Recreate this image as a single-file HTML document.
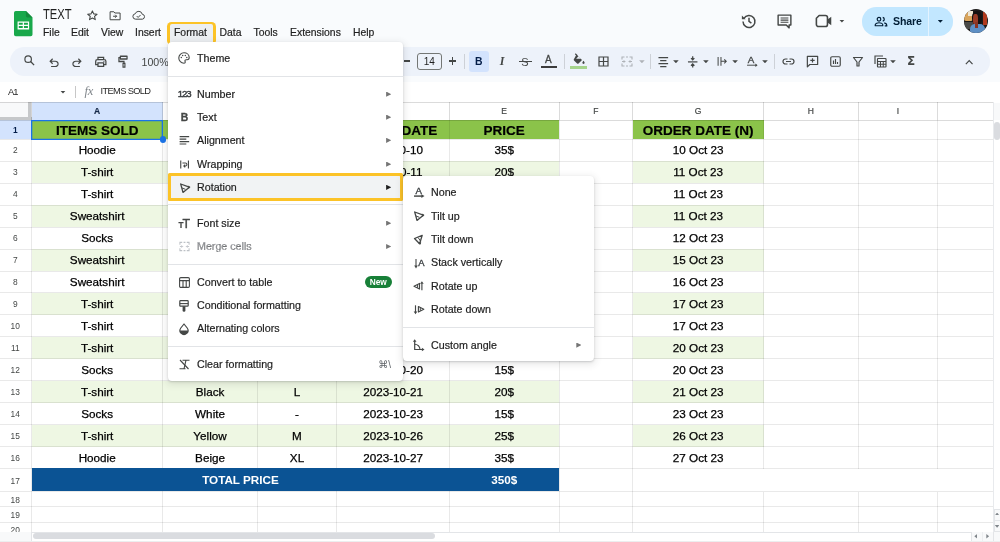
<!DOCTYPE html>
<html lang="en">
<head>
<meta charset="utf-8">
<title>TEXT - Google Sheets</title>
<style>
*{margin:0;padding:0;box-sizing:border-box}
html,body{width:1000px;height:542px;overflow:hidden;background:#f9fbfd;font-family:"Liberation Sans",sans-serif;color:#1f1f1f}
#app{position:relative;width:1000px;height:542px;overflow:hidden;will-change:transform}
#app div,#app span,#app svg{position:absolute}
#grid{left:0;top:0;width:1000px;height:542px}
.hl{left:0;width:993px;height:1px;background:#eaecee}
.vl{width:1px;background:#eaecee}
.ch{-webkit-text-stroke:.2px #444746;font-size:8.5px;color:#444746;text-align:center;line-height:18.4px}
.rn{font-size:8.4px;color:#444746;text-align:center}
.hd{-webkit-text-stroke:.2px #000;font-size:13.5px;font-weight:bold;color:#000;text-align:center;line-height:21.4px;white-space:nowrap}
.cell{-webkit-text-stroke:.25px #000;font-size:11.7px;color:#000;text-align:center;line-height:21.8px;white-space:nowrap}
.tot{font-size:11.7px;font-weight:bold;color:#fff;text-align:center;line-height:21.5px;white-space:nowrap}
.mb{-webkit-text-stroke:.2px #1f1f1f;font-size:10.4px;color:#1f1f1f;top:26px;line-height:13px;white-space:nowrap}
.ic{overflow:visible}
.menu{background:#fff;border-radius:4px;box-shadow:0 1px 2px rgba(60,64,67,.22),0 2px 7px 2px rgba(60,64,67,.11)}
.mi{-webkit-text-stroke:.2px #1f1f1f;font-size:10.7px;color:#1f1f1f;line-height:14px;white-space:nowrap}
.sep{height:1px;background:#e2e4e7}
.arr{width:5.2px;height:5.2px;background:#757575;clip-path:polygon(0 0,100% 50%,0 100%)}
.dd{width:5.6px;height:3px;background:#444746;clip-path:polygon(0 0,100% 0,50% 100%)}
.tsep{width:1px;height:14.5px;top:54px;background:#cdd1d7}
</style>
</head>
<body>
<div id="app">
<div id="grid">
<div style="left:0px;top:102.1px;width:1000px;height:439.9px;background:#fff;"></div>
<div style="left:31.5px;top:102.1px;width:131.3px;height:18.1px;background:#d3e3fd;"></div>
<div style="left:0px;top:120.2px;width:31.5px;height:19.1px;background:#d3e3fd;"></div>
<div style="left:0px;top:102.1px;width:31.5px;height:18.1px;background:#f8f9fa;"></div>
<div style="left:27.6px;top:102.1px;width:3.9px;height:18.1px;background:#c6c8ca;"></div>
<div style="left:0px;top:116.8px;width:31.5px;height:3.4px;background:#c6c8ca;"></div>
<div style="left:31.5px;top:120.2px;width:131.3px;height:19.1px;background:#8bc34a;"></div>
<div style="left:162.8px;top:120.2px;width:94.5px;height:19.1px;background:#8bc34a;"></div>
<div style="left:257.3px;top:120.2px;width:79.4px;height:19.1px;background:#8bc34a;"></div>
<div style="left:336.7px;top:120.2px;width:112.7px;height:19.1px;background:#8bc34a;"></div>
<div style="left:449.4px;top:120.2px;width:109.6px;height:19.1px;background:#8bc34a;"></div>
<div style="left:632.5px;top:120.2px;width:131.3px;height:19.1px;background:#8bc34a;"></div>
<div style="left:31.5px;top:161.25px;width:131.3px;height:21.95px;background:#eef7e3;"></div>
<div style="left:162.8px;top:161.25px;width:94.5px;height:21.95px;background:#eef7e3;"></div>
<div style="left:257.3px;top:161.25px;width:79.4px;height:21.95px;background:#eef7e3;"></div>
<div style="left:336.7px;top:161.25px;width:112.7px;height:21.95px;background:#eef7e3;"></div>
<div style="left:449.4px;top:161.25px;width:109.6px;height:21.95px;background:#eef7e3;"></div>
<div style="left:632.5px;top:161.25px;width:131.3px;height:21.95px;background:#eef7e3;"></div>
<div style="left:31.5px;top:205.15px;width:131.3px;height:21.95px;background:#eef7e3;"></div>
<div style="left:162.8px;top:205.15px;width:94.5px;height:21.95px;background:#eef7e3;"></div>
<div style="left:257.3px;top:205.15px;width:79.4px;height:21.95px;background:#eef7e3;"></div>
<div style="left:336.7px;top:205.15px;width:112.7px;height:21.95px;background:#eef7e3;"></div>
<div style="left:449.4px;top:205.15px;width:109.6px;height:21.95px;background:#eef7e3;"></div>
<div style="left:632.5px;top:205.15px;width:131.3px;height:21.95px;background:#eef7e3;"></div>
<div style="left:31.5px;top:249.05px;width:131.3px;height:21.95px;background:#eef7e3;"></div>
<div style="left:162.8px;top:249.05px;width:94.5px;height:21.95px;background:#eef7e3;"></div>
<div style="left:257.3px;top:249.05px;width:79.4px;height:21.95px;background:#eef7e3;"></div>
<div style="left:336.7px;top:249.05px;width:112.7px;height:21.95px;background:#eef7e3;"></div>
<div style="left:449.4px;top:249.05px;width:109.6px;height:21.95px;background:#eef7e3;"></div>
<div style="left:632.5px;top:249.05px;width:131.3px;height:21.95px;background:#eef7e3;"></div>
<div style="left:31.5px;top:292.95px;width:131.3px;height:21.95px;background:#eef7e3;"></div>
<div style="left:162.8px;top:292.95px;width:94.5px;height:21.95px;background:#eef7e3;"></div>
<div style="left:257.3px;top:292.95px;width:79.4px;height:21.95px;background:#eef7e3;"></div>
<div style="left:336.7px;top:292.95px;width:112.7px;height:21.95px;background:#eef7e3;"></div>
<div style="left:449.4px;top:292.95px;width:109.6px;height:21.95px;background:#eef7e3;"></div>
<div style="left:632.5px;top:292.95px;width:131.3px;height:21.95px;background:#eef7e3;"></div>
<div style="left:31.5px;top:336.85px;width:131.3px;height:21.95px;background:#eef7e3;"></div>
<div style="left:162.8px;top:336.85px;width:94.5px;height:21.95px;background:#eef7e3;"></div>
<div style="left:257.3px;top:336.85px;width:79.4px;height:21.95px;background:#eef7e3;"></div>
<div style="left:336.7px;top:336.85px;width:112.7px;height:21.95px;background:#eef7e3;"></div>
<div style="left:449.4px;top:336.85px;width:109.6px;height:21.95px;background:#eef7e3;"></div>
<div style="left:632.5px;top:336.85px;width:131.3px;height:21.95px;background:#eef7e3;"></div>
<div style="left:31.5px;top:380.75px;width:131.3px;height:21.95px;background:#eef7e3;"></div>
<div style="left:162.8px;top:380.75px;width:94.5px;height:21.95px;background:#eef7e3;"></div>
<div style="left:257.3px;top:380.75px;width:79.4px;height:21.95px;background:#eef7e3;"></div>
<div style="left:336.7px;top:380.75px;width:112.7px;height:21.95px;background:#eef7e3;"></div>
<div style="left:449.4px;top:380.75px;width:109.6px;height:21.95px;background:#eef7e3;"></div>
<div style="left:632.5px;top:380.75px;width:131.3px;height:21.95px;background:#eef7e3;"></div>
<div style="left:31.5px;top:424.65px;width:131.3px;height:21.95px;background:#eef7e3;"></div>
<div style="left:162.8px;top:424.65px;width:94.5px;height:21.95px;background:#eef7e3;"></div>
<div style="left:257.3px;top:424.65px;width:79.4px;height:21.95px;background:#eef7e3;"></div>
<div style="left:336.7px;top:424.65px;width:112.7px;height:21.95px;background:#eef7e3;"></div>
<div style="left:449.4px;top:424.65px;width:109.6px;height:21.95px;background:#eef7e3;"></div>
<div style="left:632.5px;top:424.65px;width:131.3px;height:21.95px;background:#eef7e3;"></div>
<div style="left:0px;top:101.6px;width:1000px;height:1px;background:rgba(0,0,0,.14)"></div>
<div style="left:0px;top:119.7px;width:993.3px;height:1px;background:rgba(0,0,0,.14)"></div>
<div style="left:0px;top:138.8px;width:993.3px;height:1px;background:rgba(0,0,0,.085)"></div>
<div style="left:0px;top:160.75px;width:993.3px;height:1px;background:rgba(0,0,0,.085)"></div>
<div style="left:0px;top:182.7px;width:993.3px;height:1px;background:rgba(0,0,0,.085)"></div>
<div style="left:0px;top:204.65px;width:993.3px;height:1px;background:rgba(0,0,0,.085)"></div>
<div style="left:0px;top:226.6px;width:993.3px;height:1px;background:rgba(0,0,0,.085)"></div>
<div style="left:0px;top:248.55px;width:993.3px;height:1px;background:rgba(0,0,0,.085)"></div>
<div style="left:0px;top:270.5px;width:993.3px;height:1px;background:rgba(0,0,0,.085)"></div>
<div style="left:0px;top:292.45px;width:993.3px;height:1px;background:rgba(0,0,0,.085)"></div>
<div style="left:0px;top:314.4px;width:993.3px;height:1px;background:rgba(0,0,0,.085)"></div>
<div style="left:0px;top:336.35px;width:993.3px;height:1px;background:rgba(0,0,0,.085)"></div>
<div style="left:0px;top:358.3px;width:993.3px;height:1px;background:rgba(0,0,0,.085)"></div>
<div style="left:0px;top:380.25px;width:993.3px;height:1px;background:rgba(0,0,0,.085)"></div>
<div style="left:0px;top:402.2px;width:993.3px;height:1px;background:rgba(0,0,0,.085)"></div>
<div style="left:0px;top:424.15px;width:993.3px;height:1px;background:rgba(0,0,0,.085)"></div>
<div style="left:0px;top:446.1px;width:993.3px;height:1px;background:rgba(0,0,0,.085)"></div>
<div style="left:0px;top:468.05px;width:993.3px;height:1px;background:rgba(0,0,0,.085)"></div>
<div style="left:0px;top:491.1px;width:993.3px;height:1px;background:rgba(0,0,0,.085)"></div>
<div style="left:0px;top:506.35px;width:993.3px;height:1px;background:rgba(0,0,0,.085)"></div>
<div style="left:0px;top:521.6px;width:993.3px;height:1px;background:rgba(0,0,0,.085)"></div>
<div style="left:0px;top:536.85px;width:993.3px;height:1px;background:rgba(0,0,0,.085)"></div>
<div style="left:31px;top:102.1px;width:1px;height:18.1px;background:rgba(0,0,0,.14)"></div>
<div style="left:162.3px;top:102.1px;width:1px;height:18.1px;background:rgba(0,0,0,.14)"></div>
<div style="left:256.8px;top:102.1px;width:1px;height:18.1px;background:rgba(0,0,0,.14)"></div>
<div style="left:336.2px;top:102.1px;width:1px;height:18.1px;background:rgba(0,0,0,.14)"></div>
<div style="left:448.9px;top:102.1px;width:1px;height:18.1px;background:rgba(0,0,0,.14)"></div>
<div style="left:558.5px;top:102.1px;width:1px;height:18.1px;background:rgba(0,0,0,.14)"></div>
<div style="left:632px;top:102.1px;width:1px;height:18.1px;background:rgba(0,0,0,.14)"></div>
<div style="left:763.3px;top:102.1px;width:1px;height:18.1px;background:rgba(0,0,0,.14)"></div>
<div style="left:857.5px;top:102.1px;width:1px;height:18.1px;background:rgba(0,0,0,.14)"></div>
<div style="left:937.2px;top:102.1px;width:1px;height:18.1px;background:rgba(0,0,0,.14)"></div>
<div style="left:992.8px;top:102.1px;width:1px;height:18.1px;background:rgba(0,0,0,.14)"></div>
<div style="left:31px;top:120.2px;width:1px;height:411.8px;background:rgba(0,0,0,.085)"></div>
<div style="left:162.3px;top:120.2px;width:1px;height:411.8px;background:rgba(0,0,0,.085)"></div>
<div style="left:256.8px;top:120.2px;width:1px;height:411.8px;background:rgba(0,0,0,.085)"></div>
<div style="left:336.2px;top:120.2px;width:1px;height:411.8px;background:rgba(0,0,0,.085)"></div>
<div style="left:448.9px;top:120.2px;width:1px;height:411.8px;background:rgba(0,0,0,.085)"></div>
<div style="left:558.5px;top:120.2px;width:1px;height:411.8px;background:rgba(0,0,0,.085)"></div>
<div style="left:632px;top:120.2px;width:1px;height:411.8px;background:rgba(0,0,0,.085)"></div>
<div style="left:763.3px;top:120.2px;width:1px;height:348.35px;background:rgba(0,0,0,.085)"></div>
<div style="left:763.3px;top:491.6px;width:1px;height:40.4px;background:rgba(0,0,0,.085)"></div>
<div style="left:857.5px;top:120.2px;width:1px;height:348.35px;background:rgba(0,0,0,.085)"></div>
<div style="left:857.5px;top:491.6px;width:1px;height:40.4px;background:rgba(0,0,0,.085)"></div>
<div style="left:937.2px;top:120.2px;width:1px;height:348.35px;background:rgba(0,0,0,.085)"></div>
<div style="left:937.2px;top:491.6px;width:1px;height:40.4px;background:rgba(0,0,0,.085)"></div>
<div style="left:992.8px;top:120.2px;width:1px;height:411.8px;background:rgba(0,0,0,.085)"></div>
<div style="left:31.5px;top:468.15px;width:527.5px;height:23.25px;background:#0b5394;"></div>
<div class="ch" style="left:31.5px;top:102.1px;width:131.3px;height:18.1px;font-weight:bold;color:#041e49;">A</div>
<div class="ch" style="left:162.8px;top:102.1px;width:94.5px;height:18.1px;">B</div>
<div class="ch" style="left:257.3px;top:102.1px;width:79.4px;height:18.1px;">C</div>
<div class="ch" style="left:336.7px;top:102.1px;width:112.7px;height:18.1px;">D</div>
<div class="ch" style="left:449.4px;top:102.1px;width:109.6px;height:18.1px;">E</div>
<div class="ch" style="left:559px;top:102.1px;width:73.5px;height:18.1px;">F</div>
<div class="ch" style="left:632.5px;top:102.1px;width:131.3px;height:18.1px;">G</div>
<div class="ch" style="left:763.8px;top:102.1px;width:94.2px;height:18.1px;">H</div>
<div class="ch" style="left:858px;top:102.1px;width:79.7px;height:18.1px;">I</div>
<div class="rn" style="left:0px;top:120.2px;width:30.5px;height:19.1px;font-weight:bold;color:#041e49;line-height:20.9px;">1</div>
<div class="rn" style="left:0px;top:139.3px;width:30.5px;height:21.95px;line-height:23.75px;">2</div>
<div class="rn" style="left:0px;top:161.25px;width:30.5px;height:21.95px;line-height:23.75px;">3</div>
<div class="rn" style="left:0px;top:183.2px;width:30.5px;height:21.95px;line-height:23.75px;">4</div>
<div class="rn" style="left:0px;top:205.15px;width:30.5px;height:21.95px;line-height:23.75px;">5</div>
<div class="rn" style="left:0px;top:227.1px;width:30.5px;height:21.95px;line-height:23.75px;">6</div>
<div class="rn" style="left:0px;top:249.05px;width:30.5px;height:21.95px;line-height:23.75px;">7</div>
<div class="rn" style="left:0px;top:271px;width:30.5px;height:21.95px;line-height:23.75px;">8</div>
<div class="rn" style="left:0px;top:292.95px;width:30.5px;height:21.95px;line-height:23.75px;">9</div>
<div class="rn" style="left:0px;top:314.9px;width:30.5px;height:21.95px;line-height:23.75px;">10</div>
<div class="rn" style="left:0px;top:336.85px;width:30.5px;height:21.95px;line-height:23.75px;">11</div>
<div class="rn" style="left:0px;top:358.8px;width:30.5px;height:21.95px;line-height:23.75px;">12</div>
<div class="rn" style="left:0px;top:380.75px;width:30.5px;height:21.95px;line-height:23.75px;">13</div>
<div class="rn" style="left:0px;top:402.7px;width:30.5px;height:21.95px;line-height:23.75px;">14</div>
<div class="rn" style="left:0px;top:424.65px;width:30.5px;height:21.95px;line-height:23.75px;">15</div>
<div class="rn" style="left:0px;top:446.6px;width:30.5px;height:21.95px;line-height:23.75px;">16</div>
<div class="rn" style="left:0px;top:468.55px;width:30.5px;height:23.05px;line-height:24.85px;">17</div>
<div class="rn" style="left:0px;top:491.6px;width:30.5px;height:15.25px;line-height:17.05px;">18</div>
<div class="rn" style="left:0px;top:506.85px;width:30.5px;height:15.25px;line-height:17.05px;">19</div>
<div class="rn" style="left:0px;top:522.1px;width:30.5px;height:15.25px;line-height:17.05px;">20</div>
<div class="hd" style="left:31.5px;top:120.2px;width:131.3px;height:19.1px;">ITEMS SOLD</div>
<div class="hd" style="left:162.8px;top:120.2px;width:94.5px;height:19.1px;">COLOR</div>
<div class="hd" style="left:257.3px;top:120.2px;width:79.4px;height:19.1px;">SIZE</div>
<div class="hd" style="left:336.7px;top:120.2px;width:112.7px;height:19.1px;">ORDER DATE</div>
<div class="hd" style="left:449.4px;top:120.2px;width:109.6px;height:19.1px;">PRICE</div>
<div class="hd" style="left:632.5px;top:120.2px;width:131.3px;height:19.1px;">ORDER DATE (N)</div>
<div class="cell" style="left:31.5px;top:139.3px;width:131.3px;height:21.95px;">Hoodie</div>
<div class="cell" style="left:31.5px;top:161.25px;width:131.3px;height:21.95px;">T-shirt</div>
<div class="cell" style="left:31.5px;top:183.2px;width:131.3px;height:21.95px;">T-shirt</div>
<div class="cell" style="left:31.5px;top:205.15px;width:131.3px;height:21.95px;">Sweatshirt</div>
<div class="cell" style="left:31.5px;top:227.1px;width:131.3px;height:21.95px;">Socks</div>
<div class="cell" style="left:31.5px;top:249.05px;width:131.3px;height:21.95px;">Sweatshirt</div>
<div class="cell" style="left:31.5px;top:271px;width:131.3px;height:21.95px;">Sweatshirt</div>
<div class="cell" style="left:31.5px;top:292.95px;width:131.3px;height:21.95px;">T-shirt</div>
<div class="cell" style="left:31.5px;top:314.9px;width:131.3px;height:21.95px;">T-shirt</div>
<div class="cell" style="left:31.5px;top:336.85px;width:131.3px;height:21.95px;">T-shirt</div>
<div class="cell" style="left:31.5px;top:358.8px;width:131.3px;height:21.95px;">Socks</div>
<div class="cell" style="left:31.5px;top:380.75px;width:131.3px;height:21.95px;">T-shirt</div>
<div class="cell" style="left:31.5px;top:402.7px;width:131.3px;height:21.95px;">Socks</div>
<div class="cell" style="left:31.5px;top:424.65px;width:131.3px;height:21.95px;">T-shirt</div>
<div class="cell" style="left:31.5px;top:446.6px;width:131.3px;height:21.95px;">Hoodie</div>
<div class="cell" style="left:162.8px;top:139.3px;width:94.5px;height:21.95px;">Beige</div>
<div class="cell" style="left:162.8px;top:161.25px;width:94.5px;height:21.95px;">White</div>
<div class="cell" style="left:162.8px;top:183.2px;width:94.5px;height:21.95px;">Black</div>
<div class="cell" style="left:162.8px;top:205.15px;width:94.5px;height:21.95px;">Grey</div>
<div class="cell" style="left:162.8px;top:227.1px;width:94.5px;height:21.95px;">White</div>
<div class="cell" style="left:162.8px;top:249.05px;width:94.5px;height:21.95px;">Black</div>
<div class="cell" style="left:162.8px;top:271px;width:94.5px;height:21.95px;">Beige</div>
<div class="cell" style="left:162.8px;top:292.95px;width:94.5px;height:21.95px;">Yellow</div>
<div class="cell" style="left:162.8px;top:314.9px;width:94.5px;height:21.95px;">Red</div>
<div class="cell" style="left:162.8px;top:336.85px;width:94.5px;height:21.95px;">Blue</div>
<div class="cell" style="left:162.8px;top:358.8px;width:94.5px;height:21.95px;">Black</div>
<div class="cell" style="left:162.8px;top:380.75px;width:94.5px;height:21.95px;">Black</div>
<div class="cell" style="left:162.8px;top:402.7px;width:94.5px;height:21.95px;">White</div>
<div class="cell" style="left:162.8px;top:424.65px;width:94.5px;height:21.95px;">Yellow</div>
<div class="cell" style="left:162.8px;top:446.6px;width:94.5px;height:21.95px;">Beige</div>
<div class="cell" style="left:257.3px;top:139.3px;width:79.4px;height:21.95px;">M</div>
<div class="cell" style="left:257.3px;top:161.25px;width:79.4px;height:21.95px;">S</div>
<div class="cell" style="left:257.3px;top:183.2px;width:79.4px;height:21.95px;">L</div>
<div class="cell" style="left:257.3px;top:205.15px;width:79.4px;height:21.95px;">XL</div>
<div class="cell" style="left:257.3px;top:227.1px;width:79.4px;height:21.95px;">-</div>
<div class="cell" style="left:257.3px;top:249.05px;width:79.4px;height:21.95px;">M</div>
<div class="cell" style="left:257.3px;top:271px;width:79.4px;height:21.95px;">S</div>
<div class="cell" style="left:257.3px;top:292.95px;width:79.4px;height:21.95px;">L</div>
<div class="cell" style="left:257.3px;top:314.9px;width:79.4px;height:21.95px;">M</div>
<div class="cell" style="left:257.3px;top:336.85px;width:79.4px;height:21.95px;">S</div>
<div class="cell" style="left:257.3px;top:358.8px;width:79.4px;height:21.95px;">-</div>
<div class="cell" style="left:257.3px;top:380.75px;width:79.4px;height:21.95px;">L</div>
<div class="cell" style="left:257.3px;top:402.7px;width:79.4px;height:21.95px;">-</div>
<div class="cell" style="left:257.3px;top:424.65px;width:79.4px;height:21.95px;">M</div>
<div class="cell" style="left:257.3px;top:446.6px;width:79.4px;height:21.95px;">XL</div>
<div class="cell" style="left:336.7px;top:139.3px;width:112.7px;height:21.95px;">2023-10-10</div>
<div class="cell" style="left:336.7px;top:161.25px;width:112.7px;height:21.95px;">2023-10-11</div>
<div class="cell" style="left:336.7px;top:183.2px;width:112.7px;height:21.95px;">2023-10-11</div>
<div class="cell" style="left:336.7px;top:205.15px;width:112.7px;height:21.95px;">2023-10-11</div>
<div class="cell" style="left:336.7px;top:227.1px;width:112.7px;height:21.95px;">2023-10-12</div>
<div class="cell" style="left:336.7px;top:249.05px;width:112.7px;height:21.95px;">2023-10-15</div>
<div class="cell" style="left:336.7px;top:271px;width:112.7px;height:21.95px;">2023-10-16</div>
<div class="cell" style="left:336.7px;top:292.95px;width:112.7px;height:21.95px;">2023-10-17</div>
<div class="cell" style="left:336.7px;top:314.9px;width:112.7px;height:21.95px;">2023-10-17</div>
<div class="cell" style="left:336.7px;top:336.85px;width:112.7px;height:21.95px;">2023-10-20</div>
<div class="cell" style="left:336.7px;top:358.8px;width:112.7px;height:21.95px;">2023-10-20</div>
<div class="cell" style="left:336.7px;top:380.75px;width:112.7px;height:21.95px;">2023-10-21</div>
<div class="cell" style="left:336.7px;top:402.7px;width:112.7px;height:21.95px;">2023-10-23</div>
<div class="cell" style="left:336.7px;top:424.65px;width:112.7px;height:21.95px;">2023-10-26</div>
<div class="cell" style="left:336.7px;top:446.6px;width:112.7px;height:21.95px;">2023-10-27</div>
<div class="cell" style="left:449.4px;top:139.3px;width:109.6px;height:21.95px;">35$</div>
<div class="cell" style="left:449.4px;top:161.25px;width:109.6px;height:21.95px;">20$</div>
<div class="cell" style="left:449.4px;top:183.2px;width:109.6px;height:21.95px;">20$</div>
<div class="cell" style="left:449.4px;top:205.15px;width:109.6px;height:21.95px;">30$</div>
<div class="cell" style="left:449.4px;top:227.1px;width:109.6px;height:21.95px;">15$</div>
<div class="cell" style="left:449.4px;top:249.05px;width:109.6px;height:21.95px;">30$</div>
<div class="cell" style="left:449.4px;top:271px;width:109.6px;height:21.95px;">30$</div>
<div class="cell" style="left:449.4px;top:292.95px;width:109.6px;height:21.95px;">20$</div>
<div class="cell" style="left:449.4px;top:314.9px;width:109.6px;height:21.95px;">20$</div>
<div class="cell" style="left:449.4px;top:336.85px;width:109.6px;height:21.95px;">20$</div>
<div class="cell" style="left:449.4px;top:358.8px;width:109.6px;height:21.95px;">15$</div>
<div class="cell" style="left:449.4px;top:380.75px;width:109.6px;height:21.95px;">20$</div>
<div class="cell" style="left:449.4px;top:402.7px;width:109.6px;height:21.95px;">15$</div>
<div class="cell" style="left:449.4px;top:424.65px;width:109.6px;height:21.95px;">25$</div>
<div class="cell" style="left:449.4px;top:446.6px;width:109.6px;height:21.95px;">35$</div>
<div class="cell" style="left:632.5px;top:139.3px;width:131.3px;height:21.95px;">10 Oct 23</div>
<div class="cell" style="left:632.5px;top:161.25px;width:131.3px;height:21.95px;">11 Oct 23</div>
<div class="cell" style="left:632.5px;top:183.2px;width:131.3px;height:21.95px;">11 Oct 23</div>
<div class="cell" style="left:632.5px;top:205.15px;width:131.3px;height:21.95px;">11 Oct 23</div>
<div class="cell" style="left:632.5px;top:227.1px;width:131.3px;height:21.95px;">12 Oct 23</div>
<div class="cell" style="left:632.5px;top:249.05px;width:131.3px;height:21.95px;">15 Oct 23</div>
<div class="cell" style="left:632.5px;top:271px;width:131.3px;height:21.95px;">16 Oct 23</div>
<div class="cell" style="left:632.5px;top:292.95px;width:131.3px;height:21.95px;">17 Oct 23</div>
<div class="cell" style="left:632.5px;top:314.9px;width:131.3px;height:21.95px;">17 Oct 23</div>
<div class="cell" style="left:632.5px;top:336.85px;width:131.3px;height:21.95px;">20 Oct 23</div>
<div class="cell" style="left:632.5px;top:358.8px;width:131.3px;height:21.95px;">20 Oct 23</div>
<div class="cell" style="left:632.5px;top:380.75px;width:131.3px;height:21.95px;">21 Oct 23</div>
<div class="cell" style="left:632.5px;top:402.7px;width:131.3px;height:21.95px;">23 Oct 23</div>
<div class="cell" style="left:632.5px;top:424.65px;width:131.3px;height:21.95px;">26 Oct 23</div>
<div class="cell" style="left:632.5px;top:446.6px;width:131.3px;height:21.95px;">27 Oct 23</div>
<div class="tot" style="left:31.5px;top:468.55px;width:417.9px;height:23.05px;">TOTAL PRICE</div>
<div class="tot" style="left:449.4px;top:468.55px;width:109.6px;height:23.05px;">350$</div>
<div style="left:30.8px;top:119.6px;width:132.5px;height:20.3px;box-shadow:inset 0 0 0 1.3px #1a73e8"></div>
<div style="left:159.8px;top:136.3px;width:6.4px;height:6.4px;border-radius:50%;background:#1a73e8"></div>
</div>

<!-- top header background -->
<div style="left:0;top:0;width:1000px;height:82px;background:#f9fbfd"></div>
<div style="left:0;top:82px;width:1000px;height:20px;background:#fff"></div>

<!-- ===== HEADER ===== -->
<!-- sheets logo -->
<svg class="ic" style="left:13.6px;top:10.6px" width="18.5" height="25.3" viewBox="0 0 18.6 25.6" preserveAspectRatio="none">
  <path d="M1.8 0H12l6.6 6.6v17.2a1.8 1.8 0 0 1-1.8 1.800H1.800A1.800 1.800 0 0 1 0 23.800V1.800A1.800 1.800 0 0 1 1.800 0z" fill="#19a84b"/>
  <path d="M12 0l6.600 6.600H13.500A1.500 1.500 0 0 1 12 5.100z" fill="#158a3c"/>
  <path d="M3.600 10.600h11.600v8H3.600z M4.800 11.900v2h4v-2z M10 11.900v2h4v-2z M4.800 15.200v2h4v-2z M10 15.200v2h4v-2z" fill="#fff" fill-rule="evenodd"/>
</svg>
<div style="left:43px;top:6.2px;font-size:14px;line-height:16px;color:#1f1f1f;white-space:nowrap;transform:scaleX(.8);transform-origin:0 0">TEXT</div>
<!-- star -->
<svg class="ic" style="left:85.6px;top:8.7px" width="12.8" height="12.8" viewBox="0 0 24 24"><path d="M12 3.500l2.500 5.700 6.200.600-4.700 4.100 1.400 6.100L12 16.800 6.600 20l1.400-6.100-4.700-4.100 6.200-.600z" fill="none" stroke="#444746" stroke-width="2" stroke-linejoin="round"/></svg>
<!-- move folder -->
<svg class="ic" style="left:109.4px;top:9.6px" width="12.2" height="11" viewBox="0 0 24 22"><path d="M2 3.500h7.500l2 2.500H22v13.500H2z" fill="none" stroke="#444746" stroke-width="2" stroke-linejoin="round"/><path d="M8 12.500h7m-2.800-3l3 3-3 3" fill="none" stroke="#444746" stroke-width="2"/></svg>
<!-- cloud done -->
<svg class="ic" style="left:131.6px;top:9.8px" width="13.6" height="10.2" viewBox="0 0 30 22"><path d="M8 20a6 6 0 0 1-.800-11.950A8 8 0 0 1 22.600 9.100 5.500 5.500 0 0 1 23 20z" fill="none" stroke="#444746" stroke-width="2.200" stroke-linejoin="round"/><path d="M10.500 13.200l3 3 5.500-5.600" fill="none" stroke="#444746" stroke-width="2.200"/></svg>

<!-- menu bar -->
<div style="left:167.2px;top:21.6px;width:48.6px;height:23px;border-radius:4.5px;background:#fcc327"></div>
<div style="left:169.9px;top:24.3px;width:43.2px;height:20px;border-radius:2px;background:#eceff2"></div>
<div class="mb" style="left:43px">File</div>
<div class="mb" style="left:71px">Edit</div>
<div class="mb" style="left:101px">View</div>
<div class="mb" style="left:135px">Insert</div>
<div class="mb" style="left:174px">Format</div>
<div class="mb" style="left:219.500px">Data</div>
<div class="mb" style="left:253.500px">Tools</div>
<div class="mb" style="left:290px">Extensions</div>
<div class="mb" style="left:353px">Help</div>

<!-- history -->
<svg class="ic" style="left:739.500px;top:12px" width="18" height="18" viewBox="0 0 24 24"><path d="M5.200 8.500A8 8 0 1 1 4 12.800" fill="none" stroke="#444746" stroke-width="2"/><path d="M2.500 4.800v5h5z" fill="#444746"/><path d="M12 7.500v5l3.200 2.200" fill="none" stroke="#444746" stroke-width="2"/></svg>
<!-- comment -->
<svg class="ic" style="left:776px;top:13px" width="17" height="17" viewBox="0 0 24 24"><path d="M3 3h18v14H18.500v4l-4-4H3z" fill="none" stroke="#444746" stroke-width="2" stroke-linejoin="round"/><path d="M6.500 7h11M6.500 10h11M6.500 13h11" stroke="#444746" stroke-width="1.600"/></svg>
<!-- video -->
<svg class="ic" style="left:814.500px;top:14px" width="18" height="14" viewBox="0 0 26 20"><path d="M6 2h9a3 3 0 0 1 3 3v10a3 3 0 0 1-3 3H5a3 3 0 0 1-3-3V6z" fill="none" stroke="#444746" stroke-width="2.300" stroke-linejoin="round"/><path d="M18 8l5.500-4v12L18 12z" fill="#444746"/></svg>
<div class="dd" style="left:839.1px;top:19.6px"></div>
<!-- share -->
<div style="left:861.500px;top:7px;width:91px;height:28.600px;border-radius:14.300px;background:#c2e7ff"></div>
<div style="left:927.500px;top:7px;width:1px;height:28.600px;background:#e4f3ff"></div>
<svg class="ic" style="left:873.500px;top:15.500px" width="14" height="11" viewBox="0 0 28 22"><circle cx="10" cy="6.500" r="3.600" fill="none" stroke="#001d35" stroke-width="2.400"/><path d="M2.500 19.500v-1.800c0-2.800 5-4.200 7.500-4.200s7.500 1.400 7.500 4.200v1.800z" fill="none" stroke="#001d35" stroke-width="2.400" stroke-linejoin="round"/><path d="M17.500 2.700a3.900 3.900 0 0 1 0 7.600M20.500 13.800c2.500.700 5 2 5 4v1.800h-4" fill="none" stroke="#001d35" stroke-width="2.400"/></svg>
<div style="left:893px;top:14px;font-size:10.6px;font-weight:bold;color:#001d35;line-height:14px;white-space:nowrap;letter-spacing:-.15px">Share</div>
<div class="dd" style="left:937.5px;top:19.8px;background:#001d35"></div>
<!-- avatar -->
<div style="left:963.8px;top:9.1px;width:24.4px;height:24.4px;border-radius:50%;overflow:hidden;background:#1d1b1b">
  <div style="left:0;top:3px;width:9.5px;height:9px;background:#d9a45c;border-radius:2px"></div>
  <div style="left:4px;top:2px;width:5px;height:5px;background:#efe6d2"></div>
  <div style="left:0;top:13px;width:9px;height:7px;background:#4a4a48"></div>
  <div style="left:8.5px;top:1.5px;width:10px;height:14px;border-radius:45%;background:#151212"></div>
  <div style="left:9.5px;top:5px;width:5px;height:11px;border-radius:40%;background:#9a3b26"></div>
  <div style="left:6px;top:15px;width:15px;height:10px;border-radius:5px 5px 0 0;background:#5e8fc4"></div>
  <div style="left:11px;top:13px;width:3.5px;height:6px;background:#8a3423"></div>
  <div style="left:19px;top:3px;width:4px;height:13px;background:#b23a1e"></div>
</div>

<!-- ===== TOOLBAR ===== -->
<div style="left:10px;top:47px;width:979.500px;height:28.600px;border-radius:14.300px;background:#edf2fa"></div>
<!-- search -->
<svg class="ic" style="left:23px;top:54px" width="13" height="13" viewBox="0 0 24 24"><circle cx="9.500" cy="9.500" r="6" fill="none" stroke="#444746" stroke-width="2.200"/><path d="M14 14l6.500 6.500" stroke="#444746" stroke-width="2.400"/></svg>
<!-- undo -->
<svg class="ic" style="left:47px;top:55.6px" width="14" height="14" viewBox="0 0 24 24"><path d="M7 19v-2h7.100q1.575 0 2.738-1T18 13.500 16.838 11 14.100 10H7.800l2.600 2.600L9 14 4 9l5-5 1.400 1.400L7.800 8h6.300q2.425 0 4.163 1.575T20 13.500t-1.737 3.925T14.100 19z" fill="#444746"/></svg>
<!-- redo -->
<svg class="ic" style="left:70.2px;top:55.6px" width="14" height="14" viewBox="0 0 24 24"><g transform="translate(24 0) scale(-1 1)"><path d="M7 19v-2h7.100q1.575 0 2.738-1T18 13.500 16.838 11 14.100 10H7.800l2.600 2.600L9 14 4 9l5-5 1.400 1.400L7.800 8h6.300q2.425 0 4.163 1.575T20 13.500t-1.737 3.925T14.100 19z" fill="#444746"/></g></svg>
<!-- print -->
<svg class="ic" style="left:93.8px;top:54.6px" width="13.6" height="13.6" viewBox="0 0 24 24"><path d="M7 8V4h10v4M7 17H3v-6a3 3 0 0 1 3-3h12a3 3 0 0 1 3 3v6h-4" fill="none" stroke="#444746" stroke-width="2.200"/><path d="M7 14h10v6H7z" fill="none" stroke="#444746" stroke-width="2.200"/><circle cx="17.500" cy="11.500" r="1.100" fill="#444746"/></svg>
<!-- paint format -->
<svg class="ic" style="left:117px;top:54.3px" width="13.4" height="15" viewBox="0 0 24 24" preserveAspectRatio="none"><path d="M6 3.500h12v4.500H6z" fill="none" stroke="#444746" stroke-width="2.200" stroke-linejoin="round"/><path d="M6 5.700H3.500v6.300h9v3" fill="none" stroke="#444746" stroke-width="2.200"/><path d="M10.800 15h3.400v6h-3.400z" fill="none" stroke="#444746" stroke-width="2"/></svg>
<div style="left:141.500px;top:54.500px;font-size:10.600px;line-height:14px;color:#444746;white-space:nowrap">100%</div>

<!-- font size -->
<div style="left:404px;top:60.4px;width:5.5px;height:1.4px;background:#444746"></div>
<div style="left:417px;top:53px;width:24.500px;height:17px;border:1px solid #747775;border-radius:3px"></div>
<div style="left:417px;top:54.500px;width:24.500px;font-size:10px;line-height:14px;text-align:center;color:#1f1f1f">14</div>
<div style="left:448.5px;top:60.4px;width:7.6px;height:1.5px;background:#444746"></div>
<div style="left:451.55px;top:57.35px;width:1.5px;height:7.6px;background:#444746"></div>
<div class="tsep" style="left:464px"></div>
<!-- bold -->
<div style="left:468.500px;top:51px;width:20.500px;height:21px;border-radius:3px;background:#d3e3fd"></div>
<div style="left:468.500px;top:55px;width:20.500px;font-size:10.4px;font-weight:bold;line-height:14px;text-align:center;color:#041e49">B</div>
<!-- italic -->
<div style="left:494px;top:54px;width:16px;font-size:12px;font-style:italic;font-weight:bold;font-family:'Liberation Serif',serif;line-height:14px;text-align:center;color:#444746">I</div>
<!-- strike -->
<div style="left:517px;top:54.500px;width:16px;font-size:11px;line-height:14px;text-align:center;color:#444746">S</div>
<div style="left:518.500px;top:60.800px;width:13px;height:1.200px;background:#444746"></div>
<!-- text color -->
<div style="left:540.3px;top:52.6px;width:16px;font-size:10px;line-height:14px;text-align:center;color:#444746;-webkit-text-stroke:.3px #444746">A</div>
<div style="left:541px;top:65.6px;width:16.4px;height:2.6px;background:#3c3c3c"></div>
<div class="tsep" style="left:563.800px"></div>
<!-- fill color -->
<svg class="ic" style="left:571.500px;top:53px" width="14" height="12" viewBox="0 0 28 24"><path d="M9 3l11 11-7 7a2 2 0 0 1-2.800 0L4 14.800a2 2 0 0 1 0-2.800z" fill="#444746"/><path d="M8.200 11.500l4.800-4.800 4.800 4.800z" fill="#edf2fa"/><path d="M6.500 1.500l4 4" stroke="#444746" stroke-width="2.200"/><path d="M23 15.500s2.300 2.600 2.300 4.200a2.300 2.300 0 0 1-4.600 0c0-1.600 2.300-4.200 2.300-4.200z" fill="#444746"/></svg>
<div style="left:570.3px;top:65.5px;width:16.8px;height:3.2px;background:#a5d48c"></div>
<!-- borders -->
<svg class="ic" style="left:597.500px;top:55.500px" width="11" height="11" viewBox="0 0 22 22"><path d="M2 2h18v18H2zM11 2v18M2 11h18" fill="none" stroke="#444746" stroke-width="2.400"/></svg>
<!-- merge (disabled) -->
<svg class="ic" style="left:621px;top:55.500px" width="12" height="11" viewBox="0 0 24 22"><path d="M2 7V2h5M10 2h4M17 2h5v5M2 15v5h5M10 20h4M17 20h5v-5" fill="none" stroke="#aeb2b7" stroke-width="2.200"/><path d="M2 11h6m-2.500-2.500L8 11l-2.500 2.500M22 11h-6m2.500-2.500L16 11l2.500 2.500" fill="none" stroke="#aeb2b7" stroke-width="2"/></svg>
<div class="dd" style="left:639.1px;top:60.3px;background:#aeb2b7"></div>
<div class="tsep" style="left:650px"></div>
<!-- h-align -->
<svg class="ic" style="left:657.5px;top:56.6px" width="10.6" height="10.4" viewBox="0 0 22 22" preserveAspectRatio="none"><path d="M1 1.5h20M4.500 7.800h13M1 14.200h20M4.500 20.500h13" stroke="#444746" stroke-width="2.700"/></svg>
<div class="dd" style="left:673.1px;top:60.3px"></div>
<!-- v-align -->
<svg class="ic" style="left:686.6px;top:56px" width="11.4" height="11.8" viewBox="0 0 24 26" preserveAspectRatio="none"><path d="M2 13h20" stroke="#444746" stroke-width="2.700"/><path d="M12 0.500v7m-3.500-3L12 8.500 15.500 4.500M12 25.500v-7m-3.500 3L12 17.500l3.500 4" fill="none" stroke="#444746" stroke-width="2.600"/></svg>
<div class="dd" style="left:703.1px;top:60.3px"></div>
<!-- wrap -->
<svg class="ic" style="left:717px;top:56.2px" width="10.6" height="10.6" viewBox="0 0 24 24"><path d="M2.500 2v20M9 2v20" stroke="#444746" stroke-width="2.300"/><path d="M9 12h12m-4.500-4.500L21 12l-4.500 4.500" fill="none" stroke="#444746" stroke-width="2.300"/></svg>
<div class="dd" style="left:732.3px;top:60.3px"></div>
<!-- rotate -->
<div style="left:744px;top:52.5px;width:14px;font-size:9.8px;line-height:14px;text-align:center;color:#444746;-webkit-text-stroke:.35px #444746">A</div>
<svg class="ic" style="left:746.5px;top:63.3px" width="11.5" height="4.4" viewBox="0 0 26 10"><path d="M0 5h22" stroke="#444746" stroke-width="2.200"/><path d="M19 1l5 4-5 4z" fill="#444746"/></svg>
<div class="dd" style="left:762.2px;top:60.3px"></div>
<div class="tsep" style="left:774px"></div>
<!-- link -->
<svg class="ic" style="left:781.500px;top:57.500px" width="13" height="7" viewBox="0 0 26 14"><path d="M11 2H7a5 5 0 0 0 0 10h4M15 2h4a5 5 0 0 1 0 10h-4M8 7h10" fill="none" stroke="#444746" stroke-width="2.400"/></svg>
<!-- add comment -->
<svg class="ic" style="left:805.500px;top:54.500px" width="13" height="13" viewBox="0 0 24 24"><path d="M2.500 2.500h19v15H7l-4.500 4.500z" fill="none" stroke="#444746" stroke-width="2.200" stroke-linejoin="round"/><path d="M12 6v8M8 10h8" stroke="#444746" stroke-width="2.200"/></svg>
<!-- chart -->
<svg class="ic" style="left:829.500px;top:55.500px" width="11" height="11" viewBox="0 0 22 22"><rect x="1.500" y="1.500" width="19" height="19" rx="2.500" fill="none" stroke="#444746" stroke-width="2.300"/><path d="M7 16V9M11 16V6M15 16v-4" stroke="#444746" stroke-width="2.300"/></svg>
<!-- filter -->
<svg class="ic" style="left:852px;top:55.500px" width="12" height="12" viewBox="0 0 24 24"><path d="M3 3h18l-7 9v8h-4v-8z" fill="none" stroke="#444746" stroke-width="2.400" stroke-linejoin="round"/></svg>
<!-- filter views / table -->
<svg class="ic" style="left:873.500px;top:54.500px" width="13" height="13" viewBox="0 0 26 26"><path d="M2 18V2h16" fill="none" stroke="#444746" stroke-width="2.300"/><rect x="7" y="7" width="17" height="17" rx="1" fill="none" stroke="#444746" stroke-width="2.300"/><path d="M7 13h17M13 13v11M18.500 13v11M7 18.500h17" stroke="#444746" stroke-width="2"/></svg>
<div class="dd" style="left:890.2px;top:60.3px"></div>
<!-- sigma -->
<div style="left:904px;top:53.8px;width:14px;font-size:12px;font-weight:bold;line-height:15px;text-align:center;color:#444746;font-family:'DejaVu Sans','Liberation Sans',sans-serif">Σ</div>
<!-- collapse chevron -->
<svg class="ic" style="left:965px;top:58.5px" width="8.4" height="5.900" viewBox="0 0 20 14"><path d="M2 12l8-8 8 8" fill="none" stroke="#444746" stroke-width="2.800"/></svg>

<!-- ===== FORMULA BAR ===== -->
<div style="left:8px;top:85px;font-size:9.4px;line-height:13px;color:#1f1f1f;white-space:nowrap;letter-spacing:-.9px">A1</div>
<div class="dd" style="left:60.2px;top:90.6px"></div>
<div style="left:75px;top:86px;width:1px;height:12px;background:#c7c7c7"></div>
<div style="left:84.500px;top:84px;font-size:12.5px;line-height:14px;color:#80868b;font-style:italic;font-family:'Liberation Serif',serif;white-space:nowrap;letter-spacing:-.3px">fx</div>
<div style="left:100.500px;top:85px;font-size:9.3px;line-height:13px;color:#1f1f1f;white-space:nowrap;letter-spacing:-.64px">ITEMS SOLD</div>

<!-- ===== SCROLLBARS ===== -->
<div style="left:993.3px;top:102px;width:6.7px;height:430px;background:#fff;border-left:1px solid #e8eaed"></div>
<div style="left:993.8px;top:102.5px;width:6.2px;height:17.5px;background:#f8f9fa"></div>
<div style="left:994.3px;top:121.5px;width:6px;height:18px;border-radius:3px;background:#dadce0"></div>
<!-- vertical scroll buttons -->
<div style="left:993.6px;top:508.6px;width:7px;height:23.4px;background:#f8f9fa;border:1px solid #e3e5e8"></div>
<div style="left:993.6px;top:520.3px;width:7px;height:1px;background:#e3e5e8"></div>
<div style="left:994.8px;top:512.6px;width:4.6px;height:2.8px;background:#80868b;clip-path:polygon(50% 0,100% 100%,0 100%)"></div>
<div style="left:994.8px;top:525px;width:4.6px;height:2.8px;background:#80868b;clip-path:polygon(0 0,100% 0,50% 100%)"></div>
<!-- horizontal scrollbar row -->
<div style="left:0;top:531.5px;width:1000px;height:10.5px;background:#fff;border-top:1px solid #e3e5e8"></div>
<div style="left:0;top:532px;width:31.5px;height:10px;background:#f8f9fa;border-right:1px solid #e3e5e8"></div>
<div style="left:33px;top:533.2px;width:401.6px;height:6px;border-radius:3px;background:#dadce0"></div>
<div style="left:970.5px;top:532px;width:29.5px;height:10px;background:#f8f9fa;border-left:1px solid #e3e5e8"></div>
<div style="left:981.5px;top:532px;width:1px;height:9px;background:#eceef0"></div>
<div style="left:993.4px;top:532px;width:1px;height:9px;background:#e3e5e8"></div>
<div style="left:974.3px;top:534px;width:2.8px;height:4.6px;background:#80868b;clip-path:polygon(100% 0,100% 100%,0 50%)"></div>
<div style="left:986.3px;top:534px;width:2.8px;height:4.6px;background:#80868b;clip-path:polygon(0 0,100% 50%,0 100%)"></div>
<div style="left:0;top:540.6px;width:1000px;height:1.4px;background:#eceeef"></div>

<!-- ===== MENUS ===== -->
<div class="menu" style="left:168px;top:42px;width:235px;height:339px"></div>
<div style="left:168.1px;top:173.1px;width:234.6px;height:28.1px;background:#fcc327;border-radius:1.5px"></div>
<div style="left:170.9px;top:176px;width:229px;height:22.3px;background:#f1f3f4;border-radius:.5px"></div>
<div class="mi" style="left:197px;top:51px;">Theme</div>
<div class="mi" style="left:197px;top:87px;">Number</div>
<div class="mi" style="left:197px;top:110px;">Text</div>
<div class="mi" style="left:197px;top:133.1px;">Alignment</div>
<div class="mi" style="left:197px;top:157px;">Wrapping</div>
<div class="mi" style="left:197px;top:180.3px;">Rotation</div>
<div class="mi" style="left:197px;top:216px;">Font size</div>
<div class="mi" style="left:197px;top:239.3px;color:#b0b3b8;">Merge cells</div>
<div class="mi" style="left:197px;top:275px;">Convert to table</div>
<div class="mi" style="left:197px;top:298.3px;">Conditional formatting</div>
<div class="mi" style="left:197px;top:321.2px;">Alternating colors</div>
<div class="mi" style="left:197px;top:357px;">Clear formatting</div>
<div class="sep" style="left:168px;top:75.8px;width:235px"></div>
<div class="sep" style="left:168px;top:204.2px;width:235px"></div>
<div class="sep" style="left:168px;top:264px;width:235px"></div>
<div class="sep" style="left:168px;top:346.4px;width:235px"></div>
<div class="arr" style="left:386.1px;top:91.6px"></div>
<div class="arr" style="left:386.1px;top:114.6px"></div>
<div class="arr" style="left:386.1px;top:137.7px"></div>
<div class="arr" style="left:386.1px;top:161.6px"></div>
<div class="arr" style="left:386.1px;top:220.6px"></div>
<div class="arr" style="left:386.1px;top:243.9px"></div>
<div class="arr" style="left:386.1px;top:184.7px;background:#1f1f1f"></div>
<div style="left:364.5px;top:276px;width:27.5px;height:12px;border-radius:6px;background:#188038"></div>
<div style="left:364.5px;top:276px;width:27.5px;height:12px;font-size:8.3px;font-weight:bold;color:#fff;text-align:center;line-height:12.4px">New</div>
<div style="left:378.3px;top:357.5px;font-size:10px;color:#5f6368;line-height:14px;white-space:nowrap;font-family:'DejaVu Sans','Liberation Sans',sans-serif">⌘<span style="position:static;font-family:'Liberation Sans',sans-serif">\</span></div>
<svg class="ic" style="left:178px;top:52px" width="12" height="12" viewBox="0 0 12 12"><path d="M6 0.8a5.2 5.2 0 1 0 0 10.4c0.9 0 1.3-0.5 1.3-1.1 0-0.5-0.4-0.8-0.4-1.3 0-0.7 0.5-1.1 1.2-1.100h1.100c1.100 0 2-0.900 2-2.100C11.200 2.700 8.900 0.800 6 0.800z" fill="none" stroke="#444746" stroke-width="1.1" /><circle cx="3.300" cy="5.600" r=".75" fill="#444746"/><circle cx="4.700" cy="3.400" r=".75" fill="#444746"/><circle cx="7.300" cy="3.400" r=".75" fill="#444746"/><circle cx="8.800" cy="5.500" r=".75" fill="#444746"/></svg>
<div style="left:177.8px;top:87.9px;font-size:9.6px;color:#3c4043;line-height:12px;white-space:nowrap;letter-spacing:-1.05px;-webkit-text-stroke:.45px #3c4043">123</div>
<div style="left:180.8px;top:111.2px;font-size:10.4px;font-weight:bold;color:#444746;line-height:14px;-webkit-text-stroke:.3px #444746">B</div>
<svg class="ic" style="left:179.2px;top:136.4px" width="10.8" height="8.6" viewBox="0 0 10 9"><path d="M0 0.600h10M0 3.200h7M0 5.800h10M0 8.400h7" fill="none" stroke="#444746" stroke-width="1.25" /></svg>
<svg class="ic" style="left:179.8px;top:160.1px" width="9.2" height="8.8" viewBox="0 0 11 11"><path d="M0.700 0.500v10M10.300 0.500v10" fill="none" stroke="#444746" stroke-width="1.4" /><path d="M2.800 3.800h3.800a1.800 1.800 0 0 1 0 3.600H4.500m1.700-1.700L4.500 7.400 6.200 9.100" fill="none" stroke="#444746" stroke-width="1.3" /></svg>
<svg class="ic" style="left:178.6px;top:182px" width="12" height="12" viewBox="0 0 12 12"><path d="M1.700 2l8.600 3.200-6.300 5.200z" fill="none" stroke="#444746" stroke-width="1.3" stroke-linejoin="round"/><path d="M3 6l3.400 1.300" fill="none" stroke="#444746" stroke-width="1" /><path d="M8.900 3.600l2.600 1.300-2 2z" fill="#444746"/></svg>
<div style="left:178.5px;top:221.5px;font-size:8.2px;font-weight:bold;color:#444746;line-height:8px;-webkit-text-stroke:.2px #444746">T</div>
<div style="left:182.5px;top:218px;font-size:12.4px;color:#444746;line-height:12px;-webkit-text-stroke:.4px #444746">T</div>
<svg class="ic" style="left:178.5px;top:241px" width="11" height="11" viewBox="0 0 24 22"><path d="M2 7V2h5M10 2h4M17 2h5v5M2 15v5h5M10 20h4M17 20h5v-5" fill="none" stroke="#bdc1c6" stroke-width="2.200"/><path d="M2 11h6m-2.500-2.500L8 11l-2.500 2.500M22 11h-6m2.500-2.500L16 11l2.500 2.500" fill="none" stroke="#bdc1c6" stroke-width="2"/></svg>
<svg class="ic" style="left:178.5px;top:276.5px" width="11" height="11" viewBox="0 0 11 11"><rect x=".6" y=".6" width="9.800" height="9.800" rx="1.200" fill="none" stroke="#444746" stroke-width="1.100"/><path d="M0.600 3.600h9.800M4 3.600v6.800M7.200 3.600v6.800" fill="none" stroke="#444746" stroke-width="1.1" /></svg>
<svg class="ic" style="left:179px;top:299.5px" width="10" height="12" viewBox="0 0 10 12"><rect x=".8" y=".6" width="8.400" height="5.600" rx=".8" fill="none" stroke="#444746" stroke-width="1.200"/><path d="M0.800 3.600h8.400" fill="none" stroke="#444746" stroke-width="1.1" /><path d="M3.600 6.200h2.800v4.200a1.400 1.400 0 0 1-2.800 0z" fill="#444746"/></svg>
<svg class="ic" style="left:179px;top:322.5px" width="10" height="12" viewBox="0 0 10 12"><path d="M5 1l3.200 4a4 4 0 1 1-6.400 0z" fill="none" stroke="#444746" stroke-width="1.2" stroke-linejoin="round"/><path d="M1 7.500h8a4 4 0 0 1-8 0z" fill="#444746"/></svg>
<svg class="ic" style="left:178.5px;top:359px" width="11" height="11" viewBox="0 0 11 11"><path d="M1 1l8.500 9" fill="none" stroke="#444746" stroke-width="1.1" /><path d="M3.500 1.200h7M7 1.200L5 9.800M0.500 9.800h6" fill="none" stroke="#444746" stroke-width="1.1" /></svg>
<div class="menu" style="left:403px;top:176px;width:190.60000000000002px;height:185.39999999999998px"></div>
<div class="mi" style="left:431px;top:185.3px">None</div>
<div class="mi" style="left:431px;top:208.6px">Tilt up</div>
<div class="mi" style="left:431px;top:232px">Tilt down</div>
<div class="mi" style="left:431px;top:255.3px">Stack vertically</div>
<div class="mi" style="left:431px;top:278.6px">Rotate up</div>
<div class="mi" style="left:431px;top:302px">Rotate down</div>
<div class="mi" style="left:431px;top:338px">Custom angle</div>
<div class="sep" style="left:403px;top:327px;width:190.6px"></div>
<div class="arr" style="left:576.3px;top:342.5px"></div>
<div style="left:413.8px;top:186px;width:10px;font-size:9.6px;color:#3c4043;line-height:10px;text-align:center;-webkit-text-stroke:.35px #3c4043">A</div>
<svg class="ic" style="left:414px;top:193.7px" width="10.5" height="4.2" viewBox="0 0 10 4"><path d="M0 2h8" fill="none" stroke="#444746" stroke-width="1.4" /><path d="M7 .2l3 1.800-3 1.800z" fill="#444746"/></svg>
<svg class="ic" style="left:413px;top:210px" width="12" height="12" viewBox="0 0 12 12"><path d="M1.700 2l8.600 3.200-6.300 5.200z" fill="none" stroke="#444746" stroke-width="1.3" stroke-linejoin="round"/><path d="M3 6l3.400 1.300" fill="none" stroke="#444746" stroke-width="1" /><path d="M8.900 3.600l2.600 1.300-2 2z" fill="#444746"/></svg>
<svg class="ic" style="left:413px;top:233px" width="12" height="12" viewBox="0 0 12 12"><path d="M9.200 2.300l-7.700 3.200 5.100 5.300z" fill="none" stroke="#444746" stroke-width="1.3" stroke-linejoin="round"/><path d="M5.300 4.800l2.300 3.400" fill="none" stroke="#444746" stroke-width="1" /><path d="M5.200 10.200l2.600 1.400.300-2.700z" fill="#444746"/></svg>
<svg class="ic" style="left:413.5px;top:258.8px" width="4" height="9.5" viewBox="0 0 4 9.500"><path d="M2 0v7.500" fill="none" stroke="#444746" stroke-width="1.1" /><path d="M.2 6.500l1.800 3 1.800-3z" fill="#444746"/></svg>
<div style="left:417px;top:257.5px;width:9px;font-size:9.4px;color:#3c4043;line-height:10px;text-align:center;-webkit-text-stroke:.35px #3c4043">A</div>
<svg class="ic" style="left:412px;top:280px" width="14" height="12" viewBox="412 280 14 12"><path d="M419.500 283.400L414 286.300l5.500 2.800z" fill="none" stroke="#444746" stroke-width="1.15" stroke-linejoin="round"/><path d="M417.600 284.800v3" fill="none" stroke="#444746" stroke-width="1" /><path d="M421.900 290.300v-7" fill="none" stroke="#444746" stroke-width="1.15" /><path d="M420.100 283.800l1.800-2.600 1.800 2.600z" fill="#444746"/></svg>
<svg class="ic" style="left:412px;top:304px" width="14" height="12" viewBox="412 304 14 12"><path d="M418.400 306.500l5.400 2.800-5.400 2.800z" fill="none" stroke="#444746" stroke-width="1.15" stroke-linejoin="round"/><path d="M420.300 307.800v3" fill="none" stroke="#444746" stroke-width="1" /><path d="M415.500 305.300v7" fill="none" stroke="#444746" stroke-width="1.15" /><path d="M413.700 311.600l1.800 2.600 1.800-2.600z" fill="#444746"/></svg>
<svg class="ic" style="left:411px;top:337px" width="16" height="15" viewBox="411 337 16 15"><path d="M414.700 341v8.500h8" fill="none" stroke="#444746" stroke-width="1.2" /><path d="M412.900 341.800l1.800-2.600 1.800 2.600z" fill="#444746"/><path d="M421.900 347.700l2.600 1.800-2.600 1.800z" fill="#444746"/><path d="M414.700 344.200a5.300 5.300 0 0 1 5.300 5.300" fill="none" stroke="#444746" stroke-width="1.1" /></svg>
</div>
</body>
</html>
